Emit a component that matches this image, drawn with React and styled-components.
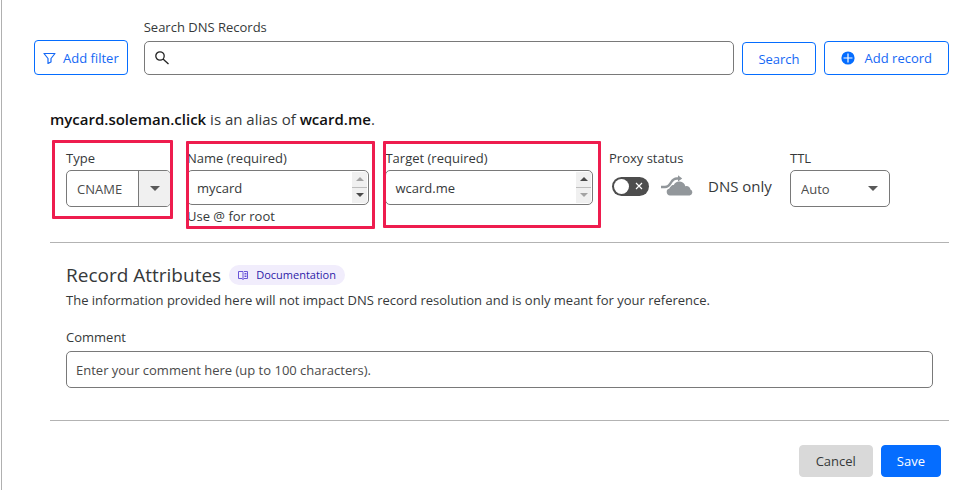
import React from "react";
import styled, { createGlobalStyle, css } from "styled-components";

const Global = createGlobalStyle`
  *, *::before, *::after { box-sizing: border-box; }
  body { margin: 0; background: #fff; }
  body, button, input, textarea, select {
    font-family: "Open Sans", "Noto Sans", sans-serif;
    font-size: 13px;
    line-height: 18px;
    color: #36393a;
  }
`;

const Page = styled.main`
  min-height: 100vh;
  margin-left: 1px;
  border-left: 1px solid #b0b0b0;
  padding: 18px 25px 12px 32px;
`;

const Toolbar = styled.form`
  display: flex;
  align-items: flex-end;
  gap: 8px;
`;

const Button = styled.button`
  display: inline-flex;
  align-items: center;
  justify-content: center;
  gap: ${(p) => p.$gap || 7}px;
  height: ${(p) => p.$height || 34}px;
  padding: 0 ${(p) => p.$pad || 15}px;
  border: 1px solid #056dff;
  border-radius: 4px;
  background: #fff;
  color: #1568f5;
  white-space: nowrap;
  cursor: pointer;
  ${(p) =>
    p.$kind === "primary" &&
    css`
      background: #056dff;
      color: #fff;
    `}
  ${(p) =>
    p.$kind === "muted" &&
    css`
      background: #d9d9d9;
      border-color: #d9d9d9;
      color: #36393a;
    `}
`;

const SearchField = styled.div`
  flex: 1;
  min-width: 0;
  margin-left: 8px;
`;

const Label = styled.label`
  display: block;
  margin-bottom: 5px;
  line-height: 18px;
  white-space: nowrap;
`;

const SearchBox = styled.div`
  display: flex;
  align-items: center;
  height: 34px;
  padding-left: 10px;
  border: 1px solid #797979;
  border-radius: 5px;
`;

const SearchInput = styled.input`
  flex: 1;
  min-width: 0;
  height: 100%;
  padding: 0 10px;
  border: 0;
  outline: 0;
  background: transparent;
`;

const Record = styled.form`
  margin: 33px 0 0 16px;
`;

const Summary = styled.p`
  margin: 0;
  font-size: 15px;
  line-height: 22px;
  b { font-weight: 600; color: #111; }
`;

const Fields = styled.div`
  display: grid;
  grid-template-columns: 105px minmax(0, 182fr) minmax(0, 207fr) 165px 100px;
  gap: 16px;
  margin: 19px 59px 17px 16px;
`;

const Field = styled.div`
  position: relative;
  min-height: 74px;
`;

const Marker = styled.span`
  position: absolute;
  top: ${(p) => p.$top}px;
  right: ${(p) => p.$right}px;
  bottom: ${(p) => p.$bottom}px;
  left: ${(p) => p.$left}px;
  border: 3px solid #ee1c4e;
  border-radius: 1px;
  pointer-events: none;
`;

const FieldLabel = styled(Label)`
  margin-bottom: 3px;
`;

const SelectBox = styled.div`
  display: grid;
  height: 37px;
  border: 1px solid #797979;
  border-radius: 5px;
  overflow: hidden;
  > * { grid-area: 1 / 1; }
`;

const Select = styled.select`
  appearance: none;
  width: 100%;
  padding: 0 10px;
  border: 0;
  outline: 0;
  background: transparent;
  color: #4c4c4c;
`;

const Caret = styled.span`
  display: flex;
  align-items: center;
  justify-content: center;
  justify-self: end;
  width: 32px;
  pointer-events: none;
  color: #595959;
  ${(p) =>
    p.$filled &&
    css`
      border-left: 1px solid #797979;
      background: #f0f0f0;
    `}
`;

const ScrollBox = styled.div`
  display: flex;
  height: 35px;
  padding: 1px;
  border: 1px solid #797979;
  border-radius: 5px;
`;

const TextArea = styled.textarea`
  flex: 1;
  min-width: 0;
  padding: 7px 8px 6px;
  border: 0;
  outline: 0;
  resize: none;
  overflow: hidden;
  background: transparent;
`;

const Steps = styled.div`
  display: grid;
  grid-template-rows: 1fr 1fr;
  width: 15px;
  background: #f0f0f0;
`;

const Step = styled.button`
  display: flex;
  align-items: center;
  justify-content: center;
  padding: 0;
  border: 0;
  background: transparent;
  color: #4a4a4a;
  &:first-child { border-bottom: 1px solid #bdbdbd; }
  &:disabled { color: #a3a3a3; }
`;

const Hint = styled.div`
  margin-top: 2px;
`;

const Proxy = styled.div`
  display: flex;
  align-items: center;
  height: 32px;
  padding-left: 3px;
  font-size: 15px;
  white-space: nowrap;
`;

const Toggle = styled.label`
  display: flex;
  align-items: center;
  width: 37px;
  height: 19px;
  padding: 2px;
  border-radius: 10px;
  background: #4d4d4d;
  cursor: pointer;
  &::before {
    content: "";
    width: 15px;
    height: 15px;
    border-radius: 50%;
    background: #fff;
  }
  svg { margin-left: 6px; }
`;

const HiddenCheck = styled.input`
  appearance: none;
  width: 0;
  height: 0;
  margin: 0;
`;

const CloudIcon = styled.svg`
  margin: 0 14px 0 12px;
`;

const Rule = styled.hr`
  height: 1px;
  margin: 0;
  border: 0;
  background: #b3b3b3;
`;

const Attributes = styled.section`
  padding: 19px 16px 32px;
`;

const Heading = styled.div`
  display: flex;
  align-items: center;
  gap: 8px;
  h2 {
    margin: 0;
    font-size: 19px;
    font-weight: 400;
    line-height: 26px;
  }
`;

const DocLink = styled.a`
  display: inline-flex;
  align-items: center;
  gap: 8px;
  height: 20px;
  padding: 0 9px;
  border-radius: 10px;
  background: #f1edfc;
  color: #2d1ba8;
  font-size: 11px;
  text-decoration: none;
`;

const Description = styled.p`
  margin: 3px 0 19px;
`;

const CommentInput = styled.input`
  display: block;
  width: 100%;
  height: 37px;
  padding: 0 9px;
  border: 1px solid #797979;
  border-radius: 5px;
  &::placeholder { color: #4a4a4a; opacity: 1; }
`;

const Actions = styled.div`
  display: flex;
  justify-content: flex-end;
  gap: 8px;
  padding: 24px 8px 0;
`;

const Triangle = ({ up, size = 12 }) => (
  <svg width={size} height={size / 2} viewBox="0 0 12 6" fill="currentColor" aria-hidden="true">
    <path d={up ? "M0 6h12L6 0z" : "M0 0h12L6 6z"} />
  </svg>
);

const FilterIcon = () => (
  <svg width="13" height="13" viewBox="0 0 13 13" fill="none" stroke="currentColor" strokeWidth="1.2" strokeLinejoin="round" aria-hidden="true">
    <path d="M1 2.500h11L8 7.500v3.500l-3 1.400V7.500z" />
  </svg>
);

const SearchIcon = () => (
  <svg width="14" height="14" viewBox="0 0 14 14" fill="none" stroke="#222" strokeWidth="1.3" aria-hidden="true">
    <circle cx="5" cy="5" r="4.200" />
    <path d="M8 8l5.500 5" />
  </svg>
);

const PlusIcon = () => (
  <svg width="14" height="14" viewBox="0 0 14 14" aria-hidden="true">
    <circle cx="7" cy="7" r="6.6" fill="#056dff" />
    <path d="M7 2.500v9M2.500 7h9" stroke="#fff" strokeWidth="1.2" />
  </svg>
);

const BookIcon = () => (
  <svg width="10" height="10" viewBox="0 0 10 10" fill="none" stroke="#6a55d8" aria-hidden="true">
    <path d="M5 1.5H.5v7H4l1 1 1-1h3.500v-7H6L5 2.500v7M6.500 3.500h2M6.500 5h2M6.500 6.500h2" />
  </svg>
);

const scrollable = [
  { id: "name", label: "Name (required)", value: "mycard", atTop: true, hint: "Use @ for root", marker: { $top: -8, $left: -1, $right: -6, $bottom: -4 } },
  { id: "target", label: "Target (required)", value: "wcard.me", atTop: false, marker: { $top: -8, $left: -2, $right: -8, $bottom: -3 } },
];

export default function App() {
  return (
    <>
      <Global />
      <Page>
        <Toolbar onSubmit={(e) => e.preventDefault()}>
          <Button type="button" $height={35} $pad={8}>
            <FilterIcon />
            Add filter
          </Button>
          <SearchField>
            <Label htmlFor="search">Search DNS Records</Label>
            <SearchBox>
              <SearchIcon />
              <SearchInput id="search" type="text" />
            </SearchBox>
          </SearchField>
          <Button type="submit" $height={33}>Search</Button>
          <Button type="button" $pad={16} $gap={10}>
            <PlusIcon />
            Add record
          </Button>
        </Toolbar>

        <Record onSubmit={(e) => e.preventDefault()}>
          <Summary>
            <b>mycard.soleman.click</b> is an alias of <b>wcard.me</b>.
          </Summary>

          <Fields>
            <Field>
              <FieldLabel htmlFor="type">Type</FieldLabel>
              <SelectBox>
                <Select id="type"><option>CNAME</option></Select>
                <Caret $filled><Triangle size={10} /></Caret>
              </SelectBox>
              <Marker $top={-9} $left={-14} $right={-2} $bottom={6} />
            </Field>
            {scrollable.map((f) => (
              <Field key={f.id}>
                <FieldLabel htmlFor={f.id}>{f.label}</FieldLabel>
                <ScrollBox>
                  <TextArea id={f.id} rows={1} defaultValue={f.value} />
                  <Steps>
                    <Step type="button" aria-label="Scroll up" disabled={f.atTop}><Triangle up size={8} /></Step>
                    <Step type="button" aria-label="Scroll down" disabled={!f.atTop}><Triangle size={8} /></Step>
                  </Steps>
                </ScrollBox>
                {f.hint && <Hint>{f.hint}</Hint>}
                <Marker {...f.marker} />
              </Field>
            ))}
            <Field>
              <FieldLabel htmlFor="proxy">Proxy status</FieldLabel>
              <Proxy>
                <Toggle>
                  <HiddenCheck id="proxy" type="checkbox" />
                  <svg width="8" height="8" viewBox="0 0 8 8" stroke="#fff" strokeWidth="1.2" aria-hidden="true">
                    <path d="M1 1l6 6M7 1L1 7" />
                  </svg>
                </Toggle>
                <CloudIcon width="33" height="22" viewBox="0 0 33 22" aria-hidden="true">
                  <path d="M9 20.500a3.500 3.500 0 0 1-.6-6.900 4 4 0 0 1 4.300-3.600 6.200 6.200 0 0 1 11.600 1.200 4.500 4.500 0 0 1 5.200 3.400 3.100 3.100 0 0 1-.8 5.900z" fill="#92979b" />
                  <path d="M0 12h4c3.500 0 4.500-2 6-4.500S13 3.500 16 3.500h2" fill="none" stroke="#fff" strokeWidth="4.500" />
                  <path d="M0 12h4c3.500 0 4.500-2 6-4.500S13 3.500 16 3.500h2" fill="none" stroke="#92979b" strokeWidth="2.400" />
                  <path d="M17 .3l4.200 3.200L17 6.500z" fill="#92979b" />
                </CloudIcon>
                DNS only
              </Proxy>
            </Field>
            <Field>
              <FieldLabel htmlFor="ttl">TTL</FieldLabel>
              <SelectBox>
                <Select id="ttl"><option>Auto</option></Select>
                <Caret><Triangle size={10} /></Caret>
              </SelectBox>
            </Field>
          </Fields>

          <Rule />
          <Attributes>
            <Heading>
              <h2>Record Attributes</h2>
              <DocLink href="#documentation">
                <BookIcon />
                Documentation
              </DocLink>
            </Heading>
            <Description>
              The information provided here will not impact DNS record resolution and is only meant for your reference.
            </Description>
            <Label htmlFor="comment">Comment</Label>
            <CommentInput id="comment" type="text" placeholder="Enter your comment here (up to 100 characters)." />
          </Attributes>
          <Rule />

          <Actions>
            <Button type="button" $kind="muted" $height={32} $pad={16}>Cancel</Button>
            <Button type="submit" $kind="primary" $height={32}>Save</Button>
          </Actions>
        </Record>
      </Page>
    </>
  );
}
